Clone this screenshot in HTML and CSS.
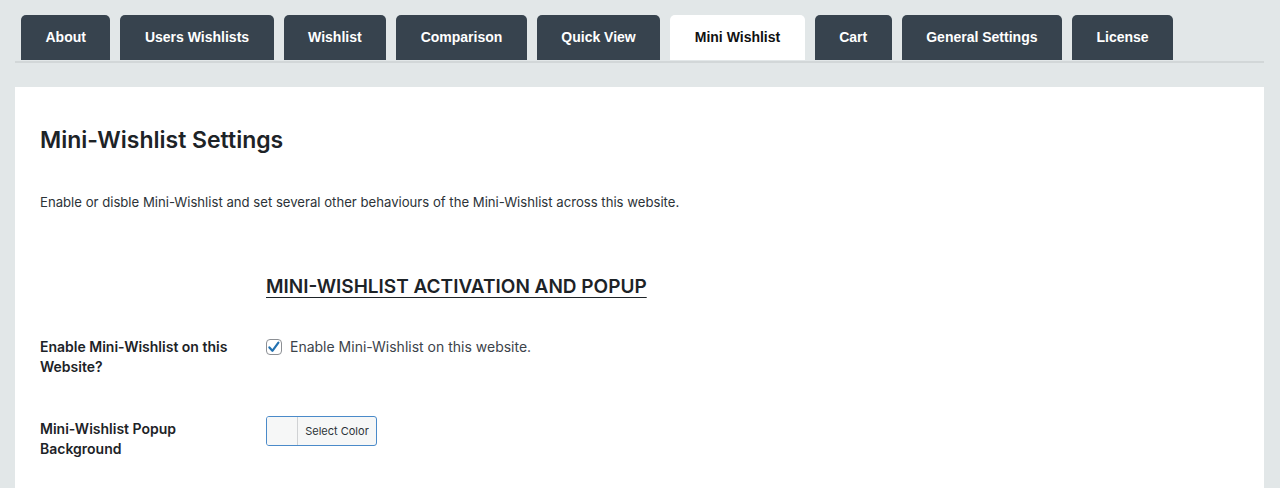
FILE: index.html
```html
<!DOCTYPE html>
<html lang="en">
<head>
  <meta charset="UTF-8">
  <title>Mini Wishlist Settings</title>
  <link rel="stylesheet" href="styles.css">
</head>
<body>
  <nav class="tabs">
    <a class="tab" href="#">About</a>
    <a class="tab" href="#">Users Wishlists</a>
    <a class="tab" href="#">Wishlist</a>
    <a class="tab" href="#">Comparison</a>
    <a class="tab" href="#">Quick View</a>
    <a class="tab active" href="#">Mini Wishlist</a>
    <a class="tab" href="#">Cart</a>
    <a class="tab" href="#">General Settings</a>
    <a class="tab" href="#">License</a>
  </nav>

  <div class="panel">
    <h1>Mini-Wishlist Settings</h1>
    <p class="desc">Enable or disble Mini-Wishlist and set several other behaviours of the Mini-Wishlist across this website.</p>

    <div class="form-table">
      <div class="label"></div>
      <h2 class="section-title">MINI-WISHLIST ACTIVATION AND POPUP</h2>

      <div class="label">Enable Mini-Wishlist on this Website?</div>
      <div class="field">
        <label class="check">
          <span class="box">
            <svg viewBox="0 0 16 16" width="16" height="16"><path d="M3.4 8.4l3 3.4 6-8.2" fill="none" stroke="#2271b1" stroke-width="2.2" stroke-linecap="round" stroke-linejoin="round"/></svg>
          </span>
          Enable Mini-Wishlist on this website.
        </label>
      </div>

      <div class="label">Mini-Wishlist Popup Background</div>
      <div class="field">
        <button class="color-btn" type="button">
          <span class="swatch"></span>
          <span class="color-text">Select Color</span>
        </button>
      </div>
    </div>
  </div>
</body>
</html>
```

FILE: styles.css
```css
* {
  box-sizing: border-box;
}
body {
  margin: 0;
  padding: 15px 16px 0 15px;
  background: #e2e7e8;
  font-family: 'Inter', sans-serif;
  color: #1d2327;
  overflow: hidden;
}
.tabs {
  display: flex;
  gap: 10px;
  padding-left: 6px;
  border-bottom: 2px solid #d2d7d8;
}
.tab {
  display: block;
  height: 45px;
  line-height: 45px;
  margin-bottom: 1px;
  padding: 0 24.5px;
  background: #37434e;
  color: #fff;
  border-radius: 5px 5px 0 0;
  font-family: 'Liberation Sans', Arial, sans-serif;
  font-size: 14px;
  font-weight: bold;
  text-decoration: none;
}
.tab.active {
  background: #fff;
  color: #111;
}
.panel {
  margin-top: 24px;
  background: #fff;
  padding: 38px 25px 40px;
  min-height: 420px;
}
.panel h1 {
  margin: 0;
  font-size: 23px;
  line-height: 30px;
  font-weight: 600;
  color: #1d2327;
}
.desc {
  margin: 37px 0 0;
  font-size: 13.15px;
  line-height: 20px;
  color: #2c3338;
}
.form-table {
  display: grid;
  grid-template-columns: 226px 1fr;
  margin-top: 62px;
}
.section-title {
  justify-self: start;
  margin: 0 0 37px;
  font-size: 19px;
  line-height: 26px;
  font-weight: 600;
  text-decoration: underline;
  text-underline-offset: 4px;
  color: #1d2327;
}
.label {
  width: 200px;
  font-size: 14px;
  line-height: 20px;
  font-weight: 600;
  color: #1d2327;
  margin-bottom: 42px;
}
.field {
  font-size: 14px;
  line-height: 20px;
  color: #3c434a;
}
.check {
  display: flex;
  align-items: center;
  gap: 8px;
}
.box {
  width: 16px;
  height: 16px;
  border: 1px solid #8c8f94;
  border-radius: 4px;
  background: #fff;
  display: flex;
  align-items: center;
  justify-content: center;
}
.box svg {
  display: block;
  overflow: visible;
}
.color-btn {
  display: flex;
  align-items: stretch;
  height: 30px;
  width: 111px;
  margin-top: -3px;
  padding: 0;
  border: 1px solid #4a8ac9;
  border-radius: 3px;
  background: #f6f7f7;
  overflow: hidden;
  cursor: pointer;
}
.swatch {
  width: 31px;
  border-right: 1px solid #d0d2d4;
  background: #f6f7f7;
}
.color-text {
  flex: 1;
  line-height: 28px;
  font-family: 'Inter', sans-serif;
  font-size: 11px;
  color: #2c3338;
  text-align: center;
}
```
